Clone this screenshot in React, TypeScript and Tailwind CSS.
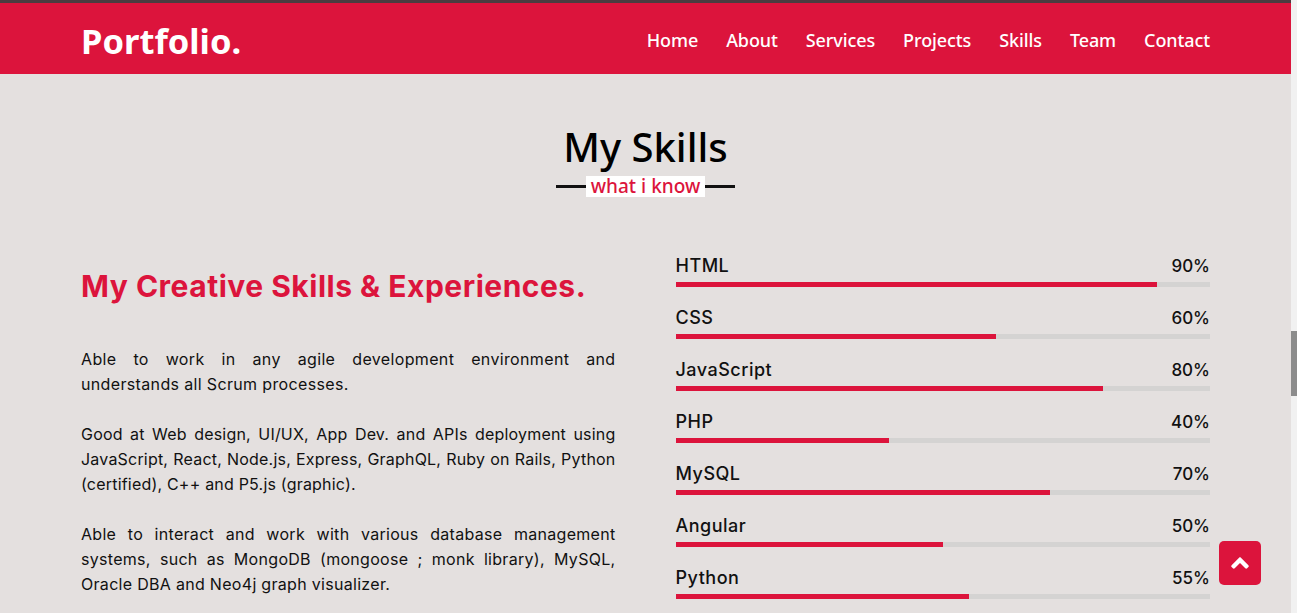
import { FaAngleUp } from "react-icons/fa";

const ubuntu = { fontFamily: '"Noto Sans", "Open Sans", sans-serif' };
const poppins = { fontFamily: 'Inter, "Noto Sans", sans-serif' };

const links = ["Home", "About", "Services", "Projects", "Skills", "Team", "Contact"];

const skills = [
  { name: "HTML", value: 90 },
  { name: "CSS", value: 60 },
  { name: "JavaScript", value: 80 },
  { name: "PHP", value: 40 },
  { name: "MySQL", value: 70 },
  { name: "Angular", value: 50 },
  { name: "Python", value: 55 },
];

const App = () => {
  return (
    <div className="h-[613px] w-full overflow-hidden flex flex-row bg-[#e4e0df]">
      <div className="w-[1291px] h-full flex flex-col">
        <div className="h-[3px] w-full shrink-0 bg-[#4b3c40]" />
        <nav className="h-[71px] w-full shrink-0 bg-[#dc143c]">
          <div className="w-[1129px] mx-auto h-full pt-[4px] flex flex-row items-center justify-between">
            <span className="text-white font-bold text-[34.5px]" style={ubuntu}>
              Portfolio.
            </span>
            <ul className="flex flex-row gap-[28px] text-white text-[18px] font-medium tracking-[-0.1px]" style={ubuntu}>
              {links.map((l) => (
                <li key={l}>{l}</li>
              ))}
            </ul>
          </div>
        </nav>

        <section className="w-full shrink-0 pt-[49px]">
          <div className="flex flex-col items-center">
            <h2 className="text-[40px] leading-[48px] font-medium text-black" style={ubuntu}>
              My Skills
            </h2>
            <div className="mt-[5px] flex flex-row items-center">
              <span className="w-[30px] h-[3px] bg-[#111]" />
              <span className="bg-white text-[#dc143c] text-[19px] leading-[21px] font-medium px-[5px]" style={ubuntu}>
                what i know
              </span>
              <span className="w-[30px] h-[3px] bg-[#111]" />
            </div>
          </div>

          <div className="w-[1129px] mx-auto mt-[54px] grid grid-cols-2 gap-[60px]" style={poppins}>
            <div className="flex flex-col">
              <h3 className="mt-[13px] text-[30px] leading-[45px] font-bold text-[#dc143c] tracking-[0.5px]">
                My Creative Skills &amp; Experiences.
              </h3>
              <div className="mt-[38px] flex flex-col gap-[25px] text-[16px] leading-[25px] text-[#111] text-justify">
                <p className="tracking-[0.35px]">
                  Able to work in any agile development environment and understands all Scrum processes.
                </p>
                <p className="tracking-[0.2px]">
                  Good at Web design, UI/UX, App Dev. and APIs deployment using JavaScript, React, Node.js, Express,
                  GraphQL, Ruby on Rails, Python (certified), C++ and P5.js (graphic).
                </p>
                <p className="tracking-[0.3px]">
                  Able to interact and work with various database management systems, such as MongoDB (mongoose ; monk
                  library), MySQL, Oracle DBA and Neo4j graph visualizer.
                </p>
              </div>
            </div>

            <div className="flex flex-col">
              {skills.map((s) => (
                <div key={s.name} className="flex flex-col mb-[16px]">
                  <div className="flex flex-row justify-between items-baseline pt-[3px] leading-[24px] font-medium text-[#111]">
                    <span className="text-[18px] tracking-[0.5px]">{s.name}</span>
                    <span className="text-[17px]">{s.value}%</span>
                  </div>
                  <div className="mt-[4px] h-[5px] w-full bg-[#d4d3d2]">
                    <div className="h-full bg-[#dc143c]" style={{ width: `${s.value}%` }} />
                  </div>
                </div>
              ))}
            </div>
          </div>
        </section>
      </div>

      <div className="w-[6px] h-full bg-[#f1f1f1] pt-[331px]">
        <div className="h-[65px] w-full bg-[#8c8c8c]" />
      </div>

      <button className="fixed right-[36px] bottom-[28px] w-[42px] h-[44px] rounded-[5px] bg-[#dc143c] flex items-center justify-center text-white">
        <FaAngleUp size={28} />
      </button>
    </div>
  );
};

export default App;
